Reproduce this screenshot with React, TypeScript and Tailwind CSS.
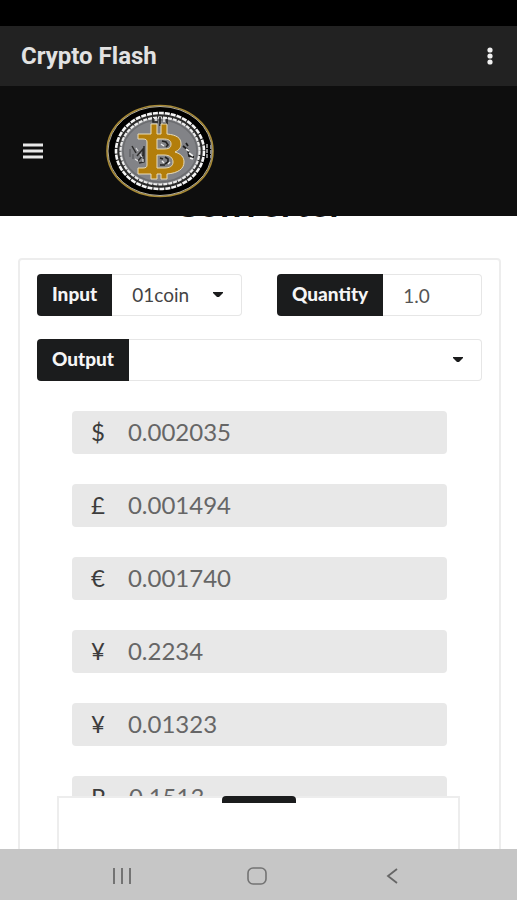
import { useState } from 'react'
import type { ReactNode } from 'react'

interface Rate {
  id: string
  symbol: string
  amount: string
}

const coins = ['01coin', 'Bitcoin', 'Ethereum', 'Litecoin']

const rates: Rate[] = [
  { id: 'usd', symbol: '$', amount: '0.002035' },
  { id: 'gbp', symbol: '£', amount: '0.001494' },
  { id: 'eur', symbol: '€', amount: '0.001740' },
  { id: 'jpy', symbol: '¥', amount: '0.2234' },
  { id: 'cny', symbol: '¥', amount: '0.01323' },
  { id: 'rub', symbol: 'R', amount: '0.1513' },
]

function CoinLogo() {
  return (
    <svg viewBox="0 0 108 94" className="h-[94px] w-[108px]" aria-hidden="true">
      <ellipse cx="54" cy="47" rx="53" ry="45.5" fill="#000" stroke="#a88a35" strokeWidth="1.6" />
      <ellipse cx="54" cy="47" rx="52" ry="44.5" fill="none" stroke="#d9d3c0" strokeWidth="0.8" />
      <ellipse cx="54" cy="47" rx="44" ry="38" fill="#2a2a2a" stroke="#f4f4f4" strokeWidth="2.6" strokeDasharray="5 1" />
      <ellipse cx="54" cy="47" rx="39.5" ry="33.5" fill="#828387" stroke="#ececec" strokeWidth="2.2" strokeDasharray="4 1" />
      <ellipse cx="54" cy="47" rx="37" ry="31" fill="none" stroke="#6c6d70" strokeWidth="1.5" />
      <path d="M101 40v15M105 41v13" stroke="#8a8a8a" strokeWidth="2" strokeDasharray="4 1" />

      {/* circuit marks behind the B */}
      <path d="M47 14v4h5M54 13v9M61 15v5h-4" stroke="#222" strokeWidth="1.6" fill="none" />
      <path d="M50 15v2M58 14v4" stroke="#eee" strokeWidth="1.4" />
      <path d="M26 42l4 7M31 52l6-7v6l-5 6M38 42v16l-5 1" stroke="#2c2c2c" strokeWidth="1.5" fill="none" />
      <path d="M29 55l3 2M34 50l2 3M37 55v3M30 44l2 3" stroke="#ddd" strokeWidth="1.2" fill="none" />
      <path d="M24 45v8M27 50v5" stroke="#606164" strokeWidth="1.4" />
      <path d="M77 42l5 4 1 6 5 1M80 39l2 3" stroke="#1d1d1d" strokeWidth="1.8" fill="none" />
      <path d="M83 49l4 3M80 45l3 2M84 54l3 1" stroke="#f0f0f0" strokeWidth="1.6" fill="none" />

      <path
        fillRule="evenodd"
        d="M45 20h6v10h4V20h6v10c10 1 14 4 14 10 0 4-2 6-6 8 6 2 9 5 9 10 0 7-6 11-17 12v5h-6v-5h-4v5h-6v-5H32v-6h5c3 0 4-1 4-3V38c0-2-1-3-4-3h-5v-5h13zM51 35v10h6c6 0 8-1 8-5s-3-5-8-5zM51 51v13h7c6 0 9-2 9-6s-3-7-9-7z"
        fill="#b37e0b"
        stroke="#e9dcb8"
        strokeWidth="1"
      />
      <path d="M56 37l4 1 2 3-2 2M54 54l3 1M59 53l3 2v3l-3 2M54 61h5" stroke="#222" strokeWidth="1.6" fill="none" />
      <path d="M55 40l3 2M56 57l2 2M62 60l2-2" stroke="#eee" strokeWidth="1.4" fill="none" />
    </svg>
  )
}

function Caret() {
  return (
    <svg
      viewBox="0 0 10 6"
      className="pointer-events-none absolute right-[18px] top-1/2 h-[6px] w-[10px] -translate-y-1/2"
      aria-hidden="true"
    >
      <path d="M0 0h10v1L6 5H4L0 1z" fill="#1b1c1d" />
    </svg>
  )
}

function Field({ id, label, children }: { id: string; label: string; children: ReactNode }) {
  return (
    <div className="flex h-[42px]">
      <label
        htmlFor={id}
        className="flex shrink-0 items-center rounded-l bg-[#1b1c1d] px-[15px] pb-[2px] text-[19px] font-black text-[#f5f5f5]"
      >
        {label}
      </label>
      <div className="relative min-w-0 flex-1 rounded-r border border-l-0 border-[#e6e6e6]">{children}</div>
    </div>
  )
}

export default function App() {
  const [coin, setCoin] = useState('01coin')
  const [output, setOutput] = useState('')
  const [quantity, setQuantity] = useState('1.0')

  return (
    <div className="flex h-screen flex-col bg-white font-['Lato',sans-serif]">
      {/* Status bar */}
      <div className="h-[26px] shrink-0 bg-black" />

      {/* App bar */}
      <div className="flex h-[60px] shrink-0 items-center justify-between bg-[#222] pl-[21px] pr-4 font-['Roboto',sans-serif]">
        <h1 className="text-[24px] font-bold text-[#e2e2e2]">Crypto Flash</h1>
        <button type="button" aria-label="More options" className="p-2">
          <svg viewBox="0 0 6 18" className="h-[18px] w-[6px]" fill="#f0f0f0">
            <circle cx="3" cy="3" r="2.6" />
            <circle cx="3" cy="9" r="2.6" />
            <circle cx="3" cy="15" r="2.6" />
          </svg>
        </button>
      </div>

      {/* Site header */}
      <header className="z-10 flex h-[130px] shrink-0 items-center gap-[63px] bg-[#0e0e0e] pl-[23px]">
        <button type="button" aria-label="Menu">
          <svg viewBox="0 0 20 16" className="h-4 w-5" stroke="#e8e8e8" strokeWidth="3">
            <path d="M0 2h20M0 8h20M0 14h20" />
          </svg>
        </button>
        <a href="#" aria-label="Home">
          <CoinLogo />
        </a>
      </header>

      {/* Converter */}
      <main className="relative min-h-0 flex-1 overflow-hidden">
        <h2 className="-mt-[34px] mb-9 text-center text-[38px] font-bold leading-[40px] text-[#111]">Converter</h2>

        <form className="ml-[18px] mr-4 rounded border-2 border-[#ededed] px-[17px] pb-8 pt-[14px]">
          <div className="grid grid-cols-2 gap-[35px]">
            <Field id="input" label="Input">
              <select
                id="input"
                value={coin}
                onChange={(e) => setCoin(e.target.value)}
                className="h-full w-full appearance-none bg-transparent pl-5 pr-8 text-[19px] text-[#444] outline-none"
              >
                {coins.map((c) => (
                  <option key={c}>{c}</option>
                ))}
              </select>
              <Caret />
            </Field>
            <Field id="quantity" label="Quantity">
              <input
                id="quantity"
                value={quantity}
                onChange={(e) => setQuantity(e.target.value)}
                className="h-full w-full bg-transparent px-5 text-[19px] text-[#555] outline-none"
              />
            </Field>
          </div>

          <div className="mt-[23px]">
            <Field id="output" label="Output">
              <select
                id="output"
                value={output}
                onChange={(e) => setOutput(e.target.value)}
                className="h-full w-full appearance-none bg-transparent pl-5 pr-8 text-[19px] text-[#444] outline-none"
              >
                <option value=""></option>
                {coins.map((c) => (
                  <option key={c}>{c}</option>
                ))}
              </select>
              <Caret />
            </Field>
          </div>

          <div className="mx-[35px] mt-[30px] space-y-[30px]">
            {rates.map((rate) => (
              <div key={rate.id} className="flex h-[43px] items-center gap-[23px] rounded bg-[#e8e8e8] pb-[2px] pl-[19px] text-[24px]">
                <label htmlFor={rate.id} className="text-[#3c3c3c]">
                  {rate.symbol}
                </label>
                <input id={rate.id} readOnly value={rate.amount} className="min-w-0 flex-1 bg-transparent text-[#666] outline-none" />
              </div>
            ))}
          </div>
        </form>

        {/* Bottom sheet */}
        <div className="absolute inset-x-[57px] bottom-0 h-[53px] border-2 border-b-0 border-[#ededed] bg-white">
          <div className="mx-auto -mt-[2px] h-[7px] w-[74px] rounded-t-sm bg-[#1b1c1d]" />
        </div>
      </main>

      {/* System navigation */}
      <nav className="flex h-[51px] shrink-0 items-center justify-center gap-[115px] bg-[#c6c6c6] pr-1 pt-[2px]">
        <button type="button" aria-label="Recents">
          <svg viewBox="0 0 20 18" className="h-[18px] w-5" stroke="#737373" strokeWidth="2">
            <path d="M2 1v16M10 1v16M18 1v16" />
          </svg>
        </button>
        <button type="button" aria-label="Home screen">
          <svg viewBox="0 0 20 18" className="h-[18px] w-5" fill="none" stroke="#737373" strokeWidth="1.6">
            <rect x="1" y="1" width="18" height="16" rx="5" />
          </svg>
        </button>
        <button type="button" aria-label="Back">
          <svg viewBox="0 0 20 18" className="h-[18px] w-5" fill="none" stroke="#666" strokeWidth="1.8">
            <path d="M15 2L6 9l9 7" />
          </svg>
        </button>
      </nav>
    </div>
  )
}
